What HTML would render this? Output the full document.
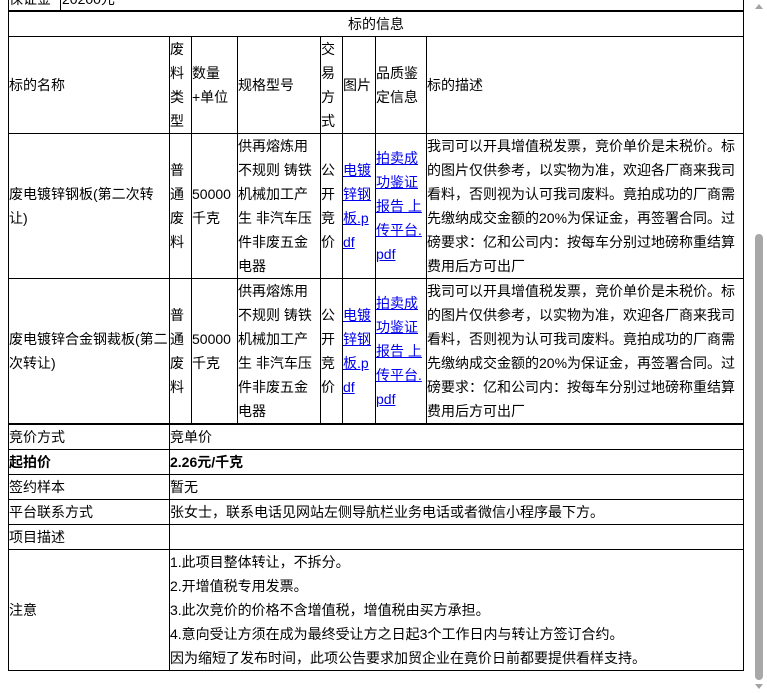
<!DOCTYPE html>
<html><head><meta charset="utf-8"><style>
body{margin:0;width:767px;height:693px;overflow:hidden;background:#fff;font-family:"Liberation Sans","Noto Sans CJK SC",sans-serif;font-size:14px;color:#000;position:relative}
.h{position:absolute;height:1px;background:#000}
.v{position:absolute;width:1px;background:#000}
.c{position:absolute;display:flex;align-items:center;line-height:24px;white-space:nowrap}
a{color:#0000ee;text-decoration:underline}
</style></head><body>
<div class="c" style="left:9px;top:-13px;height:24px">保证金</div>
<div class="c" style="left:62px;top:-13px;height:24px">20200元</div>
<div class="v" style="left:60px;top:0;height:11px"></div>
<div class="h" style="left:8px;top:10px;width:736px;height:2px"></div>
<div class="c" style="left:9px;top:12px;width:734px;height:24px;justify-content:center">标的信息</div>
<div class="h" style="left:8px;top:36px;width:736px"></div>
<div class="h" style="left:8px;top:133px;width:736px"></div>
<div class="h" style="left:8px;top:278px;width:736px"></div>
<div class="h" style="left:8px;top:423px;width:736px;height:2px"></div>
<div class="v" style="left:8px;top:0;height:671px"></div>
<div class="v" style="left:743px;top:0;height:671px"></div>
<div class="v" style="left:169px;top:36px;height:388px"></div>
<div class="v" style="left:191px;top:36px;height:388px"></div>
<div class="v" style="left:237px;top:36px;height:388px"></div>
<div class="v" style="left:320px;top:36px;height:388px"></div>
<div class="v" style="left:342px;top:36px;height:388px"></div>
<div class="v" style="left:375px;top:36px;height:388px"></div>
<div class="v" style="left:426px;top:36px;height:388px"></div>
<div class="c" style="left:9px;top:37px;height:96px">标的名称</div>
<div class="c" style="left:170px;top:37px;height:96px">废<br>料<br>类<br>型</div>
<div class="c" style="left:192px;top:37px;height:96px">数量<br>+单位</div>
<div class="c" style="left:238px;top:37px;height:96px">规格型号</div>
<div class="c" style="left:321px;top:37px;height:96px">交<br>易<br>方<br>式</div>
<div class="c" style="left:343px;top:37px;height:96px">图片</div>
<div class="c" style="left:376px;top:37px;height:96px">品质鉴<br>定信息</div>
<div class="c" style="left:427px;top:37px;height:96px">标的描述</div>
<div class="c" style="left:9px;top:134px;height:144px">废电镀锌钢板(第二次转<br>让)</div>
<div class="c" style="left:170px;top:134px;height:144px">普<br>通<br>废<br>料</div>
<div class="c" style="left:192px;top:134px;height:144px">50000<br>千克</div>
<div class="c" style="left:238px;top:134px;height:144px">供再熔炼用<br>不规则 铸铁<br>机械加工产<br>生 非汽车压<br>件非废五金<br>电器</div>
<div class="c" style="left:321px;top:134px;height:144px">公<br>开<br>竞<br>价</div>
<div class="c" style="left:343px;top:134px;height:144px"><a>电镀<br>锌钢<br>板.p<br>df</a></div>
<div class="c" style="left:376px;top:134px;height:144px"><a>拍卖成<br>功鉴证<br>报告 上<br>传平台.<br>pdf</a></div>
<div class="c" style="left:427px;top:134px;height:144px">我司可以开具增值税发票，竞价单价是未税价。标<br>的图片仅供参考，以实物为准，欢迎各厂商来我司<br>看料，否则视为认可我司废料。竟拍成功的厂商需<br>先缴纳成交金额的20%为保证金，再签署合同。过<br>磅要求：亿和公司内：按每车分别过地磅称重结算<br>费用后方可出厂</div>
<div class="c" style="left:9px;top:279px;height:144px">废电镀锌合金钢裁板(第二<br>次转让)</div>
<div class="c" style="left:170px;top:279px;height:144px">普<br>通<br>废<br>料</div>
<div class="c" style="left:192px;top:279px;height:144px">50000<br>千克</div>
<div class="c" style="left:238px;top:279px;height:144px">供再熔炼用<br>不规则 铸铁<br>机械加工产<br>生 非汽车压<br>件非废五金<br>电器</div>
<div class="c" style="left:321px;top:279px;height:144px">公<br>开<br>竞<br>价</div>
<div class="c" style="left:343px;top:279px;height:144px"><a>电镀<br>锌钢<br>板.p<br>df</a></div>
<div class="c" style="left:376px;top:279px;height:144px"><a>拍卖成<br>功鉴证<br>报告 上<br>传平台.<br>pdf</a></div>
<div class="c" style="left:427px;top:279px;height:144px">我司可以开具增值税发票，竞价单价是未税价。标<br>的图片仅供参考，以实物为准，欢迎各厂商来我司<br>看料，否则视为认可我司废料。竟拍成功的厂商需<br>先缴纳成交金额的20%为保证金，再签署合同。过<br>磅要求：亿和公司内：按每车分别过地磅称重结算<br>费用后方可出厂</div>
<div class="v" style="left:169px;top:424px;height:246px"></div>
<div class="h" style="left:8px;top:449px;width:736px"></div>
<div class="h" style="left:8px;top:474px;width:736px"></div>
<div class="h" style="left:8px;top:499px;width:736px"></div>
<div class="h" style="left:8px;top:524px;width:736px"></div>
<div class="h" style="left:8px;top:549px;width:736px"></div>
<div class="h" style="left:8px;top:670px;width:736px"></div>
<div class="c" style="left:9px;top:425px;height:24px">竞价方式</div>
<div class="c" style="left:170px;top:425px;height:24px">竞单价</div>
<div class="c" style="left:9px;top:450px;height:24px;font-weight:bold">起拍价</div>
<div class="c" style="left:170px;top:450px;height:24px;font-weight:bold">2.26元/千克</div>
<div class="c" style="left:9px;top:475px;height:24px">签约样本</div>
<div class="c" style="left:170px;top:475px;height:24px">暂无</div>
<div class="c" style="left:9px;top:500px;height:24px">平台联系方式</div>
<div class="c" style="left:170px;top:500px;height:24px">张女士，联系电话见网站左侧导航栏业务电话或者微信小程序最下方。</div>
<div class="c" style="left:9px;top:525px;height:24px">项目描述</div>
<div class="c" style="left:9px;top:550px;height:120px">注意</div>
<div class="c" style="left:170px;top:550px;height:120px">1.此项目整体转让，不拆分。<br>2.开增值税专用发票。<br>3.此次竞价的价格不含增值税，增值税由买方承担。<br>4.意向受让方须在成为最终受让方之日起3个工作日内与转让方签订合约。<br>因为缩短了发布时间，此项公告要求加贸企业在竟价日前都要提供看样支持。</div>
<div style="position:absolute;left:752px;top:0;width:15px;height:693px;background:#fff"></div>
<div style="position:absolute;left:755px;top:4px;width:0;height:0;border-left:4px solid transparent;border-right:4px solid transparent;border-bottom:5px solid #a3a3a3"></div>
<div style="position:absolute;left:755px;top:684px;width:0;height:0;border-left:4px solid transparent;border-right:4px solid transparent;border-top:5px solid #a3a3a3"></div>
<div style="position:absolute;left:755px;top:234px;width:8px;height:446px;border-radius:4px;background:#a8a8a8"></div>
</body></html>
